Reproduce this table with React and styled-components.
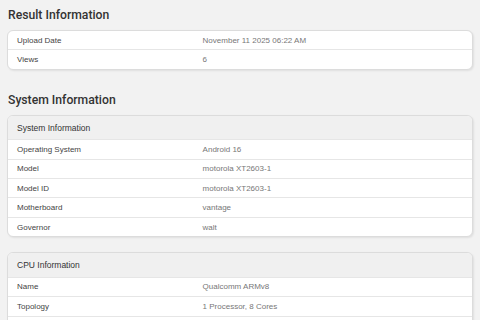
import React from "react";
import styled, { createGlobalStyle } from "styled-components";

const Global = createGlobalStyle`
  html, body { margin: 0; padding: 0; background: #f2f2f2; }
  body { font-family: "Liberation Sans", Arial, sans-serif; overflow: hidden; }
`;

const Page = styled.div`
  padding: 6px 7px 0 7px;
  display: flex;
  flex-direction: column;
`;

const SectionTitle = styled.h2`
  margin: 0 0 6px 1px;
  font-family: Roboto, "Liberation Sans", sans-serif;
  font-weight: 500;
  font-size: 12.2px;
  line-height: 18px;
  color: #333;
`;

const Section = styled.section`
  display: flex;
  flex-direction: column;
  margin-bottom: ${(p) => p.$gap}px;
`;

const Card = styled.div`
  background: #fff;
  border: 1px solid #dcdcdc;
  border-radius: 6px;
  box-shadow: 1px 1px 2px rgba(0, 0, 0, 0.08);
  overflow: hidden;
  margin-bottom: ${(p) => p.$gap || 0}px;
`;

const Header = styled.div`
  height: 23.5px;
  display: flex;
  align-items: center;
  padding-left: 9px;
  background: #f0f0f0;
  font-size: 8.5px;
  color: #333;
`;

const Row = styled.div`
  display: grid;
  grid-template-columns: 40% 60%;
  height: 18.4px;
  align-items: center;
  border-top: ${(p) => (p.$first ? "none" : "1px solid #e6e6e6")};
  font-size: 8px;
`;

const Label = styled.span`
  padding-left: 9px;
  color: #444;
`;

const Value = styled.span`
  padding-left: 9px;
  color: #777;
`;

const InfoCard = ({ title, rows, gap, trailing }) => (
  <Card $gap={gap}>
    {title && <Header>{title}</Header>}
    {rows.map(([l, v], i) => (
      <Row key={i} $first={!title && i === 0}>
        <Label>{l}</Label>
        <Value>{v}</Value>
      </Row>
    ))}
    {trailing && <Row />}
  </Card>
);

export default function App() {
  return (
    <>
      <Global />
      <Page>
        <Section $gap={21}>
          <SectionTitle>Result Information</SectionTitle>
          <InfoCard
            rows={[
              ["Upload Date", "November 11 2025 06:22 AM"],
              ["Views", "6"],
            ]}
          />
        </Section>
        <Section $gap={0}>
          <SectionTitle>System Information</SectionTitle>
          <InfoCard
            gap={15}
            title="System Information"
            rows={[
              ["Operating System", "Android 16"],
              ["Model", "motorola XT2603-1"],
              ["Model ID", "motorola XT2603-1"],
              ["Motherboard", "vantage"],
              ["Governor", "walt"],
            ]}
          />
          <InfoCard
            title="CPU Information"
            trailing
            rows={[
              ["Name", "Qualcomm ARMv8"],
              ["Topology", "1 Processor, 8 Cores"],
            ]}
          />
        </Section>
      </Page>
    </>
  );
}
